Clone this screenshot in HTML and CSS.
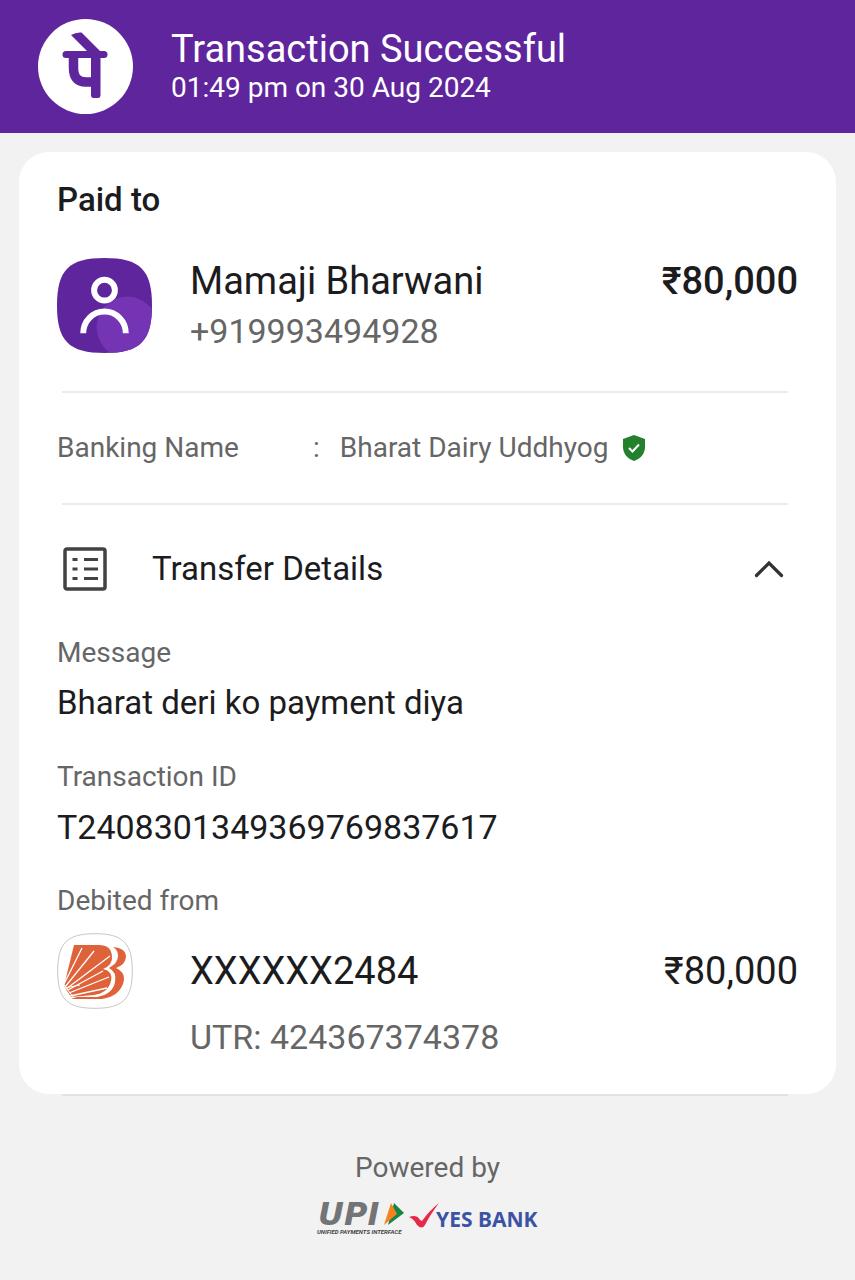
FILE: index.html
```html
<!DOCTYPE html>
<html lang="en">
<head>
<meta charset="utf-8">
<meta name="viewport" content="width=device-width, initial-scale=1">
<title>Transaction Successful</title>
<link rel="stylesheet" href="styles.css">
</head>
<body>
<header class="topbar">
  <svg class="brand" viewBox="0 0 95 95" role="img" aria-label="PhonePe">
    <circle cx="47.5" cy="47.5" r="47.5" fill="#fff"/>
    <g fill="none" stroke="#5f259c" stroke-linejoin="round">
      <path d="M28 35.5H66" stroke-width="7" stroke-linecap="round"/>
      <path d="M35.500 36V49Q35.500 63 48 63H57" stroke-width="9.5"/>
    </g>
    <path d="M53 36H62.500V76Q62.500 79 60 79H55.500Q53 79 53 76ZM33 16Q38 13 43.500 13.500L63 33H50Z" fill="#5f259c"/>
  </svg>
  <div>
    <h1 class="title">Transaction Successful</h1>
    <p class="date">01:49 pm on 30 Aug 2024</p>
  </div>
</header>

<main class="page">
  <section class="card">
    <h2 class="heading">Paid to</h2>
    <div class="party payee">
      <svg class="avatar" viewBox="0 0 96 96" aria-hidden="true">
        <defs><clipPath id="tile"><path d="M48 0C84 0 96 12 96 48S84 96 48 96S0 84 0 48S12 0 48 0Z"/></clipPath></defs>
        <g clip-path="url(#tile)">
          <path fill="#5f259c" d="M0 0H96V96H0Z"/>
          <circle cx="71" cy="70" r="31" fill="#7434b3"/>
        </g>
        <g fill="none" stroke="#fff" stroke-width="6">
          <circle cx="48" cy="32.500" r="10.500"/>
          <path d="M26.500 76A21.500 22 0 0 1 69.500 76"/>
        </g>
      </svg>
      <div class="who">
        <p class="name">Mamaji Bharwani</p>
        <p class="sub">+919993494928</p>
      </div>
      <p class="amount strong">₹80,000</p>
    </div>
    <hr class="rule">
    <dl class="banking">
      <dt>Banking Name</dt>
      <dd><span>:</span><span>Bharat Dairy Uddhyog</span>
        <svg class="shield" viewBox="0 0 24 28" role="img" aria-label="Verified"><path fill="#23802d" d="M12 1L23 5V13C23 20 18 25 12 27C6 25 1 20 1 13V5Z"/><path d="M7 14L10.500 17.500L17 10.500" fill="none" stroke="#fff" stroke-width="2"/></svg>
      </dd>
    </dl>
    <hr class="rule">
    <button class="toggle" type="button" aria-expanded="true">
      <svg class="list-icon" viewBox="0 0 44 44" aria-hidden="true"><rect x="2" y="2" width="40" height="40" rx="2" fill="none" stroke="#424143" stroke-width="3.5"/><path fill="none" stroke="#424143" stroke-width="3.2" d="M9.500 12.500H14.500M21 12.500H35M9.500 22H14.500M21 22H35M9.500 31.500H14.500M21 31.500H35"/></svg>
      <span>Transfer Details</span>
      <svg class="chevron" viewBox="0 0 30 18" aria-hidden="true"><path d="M2.500 15.500L15 3L27.500 15.500" fill="none" stroke="#333" stroke-width="3.2" stroke-linecap="round"/></svg>
    </button>
    <dl class="details">
      <dt>Message</dt>
      <dd>Bharat deri ko payment diya</dd>
      <dt>Transaction ID</dt>
      <dd class="code">T2408301349369769837617</dd>
    </dl>
    <h3 class="label">Debited from</h3>
    <div class="party debit">
      <svg class="bank" viewBox="0 0 76 76" role="img" aria-label="Bank of Baroda">
        <path d="M38 .7C66 .7 75.300 10 75.300 38S66 75.300 38 75.300S.7 66 .7 38S10 .7 38 .7Z" fill="#fff" stroke="#c9c5c9"/>
        <g fill="#df633a">
          <path d="M17 12H42Q54 12 55 23Q56 32 46 36Q56 38 54 48Q51 60 37 62L14 64L7 53Z"/>
          <path d="M56 14Q69 15 69 24Q68 32 59 35Q68 39 67 47Q64 63 45 66H14L20 64H40Q56 61 58 49Q60 39 52 35Q61 30 61 23Q61 17 56 14Z"/>
        </g>
        <path d="M6 53L25 15M8 54L37 18M9 56L53 23M11 57L46 38M12 60L52 44M13 63L50 55" fill="none" stroke="#fff" stroke-width="1.300"/>
        <path d="M7 52L17 65M8 55L23 52" fill="none" stroke="#fff" stroke-width="1"/>
      </svg>
      <p class="name">XXXXXX2484</p>
      <p class="amount">₹80,000</p>
      <p class="sub utr">UTR: 424367374378</p>
    </div>
  </section>
  <hr class="rule end">
</main>

<footer class="powered">
  <p class="label">Powered by</p>
  <div class="logos">
    <svg class="upi" viewBox="0 0 88 36" role="img" aria-label="UPI Unified Payments Interface">
      <text class="upi-name" x="2" y="25">UPI</text>
      <path fill="#168444" d="M78 3L88 13L72 25Z"/>
      <path fill="#f58220" d="M75 3L81 14L68 25Z"/>
      <text class="upi-tag" x="1" y="34">UNIFIED PAYMENTS INTERFACE</text>
    </svg>
    <svg class="yes" viewBox="0 0 132 36" role="img" aria-label="Yes Bank">
      <path fill="#e6294b" d="M2 17Q10 14 13 20L15 21Q22 11 32 3Q23 15 18 25Q15 30 10 25Q7 19 2 17Z"/>
      <text class="yes-name" x="29" y="27">YES BANK</text>
    </svg>
  </div>
</footer>
</body>
</html>
```
FILE: styles.css
```css
* { box-sizing: border-box; }
body { margin: 0; background: #f2f2f2; color: #1c1c1e; font-family: Roboto, "Noto Sans", sans-serif; }
h1, h2, h3, p, dl, dd { margin: 0; font-weight: 400; }
svg { display: block; flex: none; overflow: visible; }

.topbar { display: flex; align-items: center; gap: 38px; padding: 19px 38px; background: #5f259c; color: #fff; }
.brand { width: 95px; height: 95px; }
.title { padding-top: 2px; font-size: 38px; line-height: 40px; }
.date { font-size: 28px; line-height: 38px; }

.page { padding: 19px 19px 0; }
.card { padding: 28px 38px 33px; background: #fff; border-radius: 30px; }
.heading { font-size: 33px; line-height: 40px; font-weight: 500; }

.party { display: grid; grid-template-columns: 95px 1fr auto; column-gap: 38px; }
.payee { margin-top: 35px; align-items: center; }
.payee .amount { align-self: start; }
.avatar { width: 95px; height: 95px; }
.name, .amount { font-size: 38px; line-height: 52px; }
.strong { font-weight: 500; }
.sub { font-size: 34px; line-height: 48px; color: #666; }

.rule { height: 2px; margin: 0 10px 0 5px; border: 0; background: #ebebeb; }
.payee + .rule { margin-top: 36px; }
.end { margin: 0 48px 0 43px; background: #e2e2e2; }

.banking { display: flex; align-items: center; padding: 37px 0; font-size: 28px; line-height: 36px; color: #666; }
.banking dt { width: 256px; }
.banking dd { display: flex; align-items: center; gap: 14px; }
.banking dd span:first-child { margin-right: 6px; }
.shield { width: 24px; height: 28px; }

.toggle { display: flex; align-items: center; width: 100%; gap: 45px; padding: 42px 14px 42px 6px; border: 0; background: none; color: inherit; font: 33px/44px Roboto, sans-serif; text-align: left; }
.toggle span { flex: 1; }
.list-icon { width: 44px; height: 44px; }
.chevron { width: 30px; height: 18px; }

.label, .details dt { font-size: 28px; line-height: 40px; color: #666; }
.details dd { margin: 2px 0 26px; font-size: 33px; line-height: 56px; }
.details .code { font-size: 34px; }

.debit { margin-top: 12px; }
.bank { width: 76px; height: 76px; }
.debit .name, .debit .amount { line-height: 76px; }
.utr { grid-column: 2; margin-top: 4px; }

.powered { padding: 52px 0 44px; text-align: center; }
.logos { display: flex; justify-content: center; margin-top: 12px; gap: 3px; }
.upi { width: 88px; height: 36px; }
.yes { width: 132px; height: 36px; }
.upi-name { font: italic 700 32px "DejaVu Sans", sans-serif; fill: #737477; }
.upi-tag { font: italic 700 6px Roboto, sans-serif; fill: #444; }
.yes-name { font: 700 21px "Noto Sans", sans-serif; fill: #3b53a4; }
```
